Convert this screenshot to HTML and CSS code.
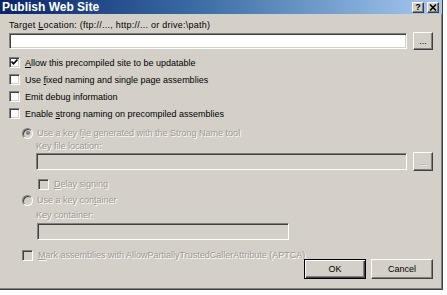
FILE: index.html
```html
<!DOCTYPE html>
<html lang="en">
<head>
    <meta charset="UTF-8">
    <title>Publish Web Site</title>
    <link rel="stylesheet" href="styles.css">
</head>
<body>
    <div class="dialog">
        <div class="titlebar">
            <span class="title">Publish Web Site</span>
            <div class="caption-btns">
                <span class="cap-btn">?</span>
                <span class="cap-btn close">
                    <svg width="8" height="7" viewBox="0 0 8 7"><path d="M1 0.5 L7 6.5 M7 0.5 L1 6.5" stroke="#000" stroke-width="1.6"/></svg>
                </span>
            </div>
        </div>

        <div class="content">
            <div class="label-row">Target <u>L</u>ocation: (ftp://..., http://... or drive:\path)</div>
            <div class="field-row">
                <div class="textbox"></div>
                <button class="btn browse">...</button>
            </div>

            <div class="check-row first">
                <span class="check checked">
                    <svg width="9" height="9" viewBox="0 0 9 9"><path d="M1.5 3.5 L3.5 5.8 L7.5 1.5" fill="none" stroke="#000" stroke-width="1.7"/></svg>
                </span>
                <span><u>A</u>llow this precompiled site to be updatable</span>
            </div>
            <div class="check-row">
                <span class="check"></span>
                <span>Use <u>f</u>ixed naming and single page assemblies</span>
            </div>
            <div class="check-row">
                <span class="check"></span>
                <span>Emit debu<u>g</u> information</span>
            </div>
            <div class="check-row">
                <span class="check"></span>
                <span>Enable <u>s</u>trong naming on precompiled assemblies</span>
            </div>

            <div class="strong-group disabled">
                <div class="radio-row first">
                    <span class="radio selected"></span>
                    <span>Use a key f<u>i</u>le generated with the Strong Name tool</span>
                </div>
                <div class="sub">
                    <div class="sub-label">Key file location:</div>
                    <div class="field-row tall">
                        <div class="textbox off"></div>
                        <button class="btn browse off">...</button>
                    </div>
                    <div class="check-row delay">
                        <span class="check off"></span>
                        <span><u>D</u>elay signing</span>
                    </div>
                </div>
                <div class="radio-row">
                    <span class="radio"></span>
                    <span>Use a key con<u>t</u>ainer</span>
                </div>
                <div class="sub">
                    <div class="sub-label container">Key container:</div>
                    <div class="textbox off short"></div>
                </div>
                <div class="check-row mark">
                    <span class="check off"></span>
                    <span><u>M</u>ark assemblies with AllowPartiallyTrustedCallerAttribute (APTCA)</span>
                </div>
            </div>

            <div class="actions">
                <button class="btn default">OK</button>
                <button class="btn">Cancel</button>
            </div>
        </div>
    </div>
</body>
</html>
```

FILE: styles.css
```css
body {
    margin: 0;
    background: #fdfdfd;
    font-family: 'Liberation Sans', Arial, sans-serif;
    font-size: 9px;
    color: #000;
}

.dialog {
    width: 443px;
    height: 290px;
    box-sizing: border-box;
    background: #d4d0c8;
    border-right: 1px solid #404040;
    border-bottom: 1px solid #404040;
    box-shadow: inset -1px -1px 0 #808080;
    display: flex;
    flex-direction: column;
}

.titlebar {
    height: 14px;
    background: linear-gradient(to right, #0a246a 0%, #3a6ea5 45%, #a6caf0 100%);
    display: flex;
    align-items: center;
    justify-content: space-between;
    padding: 0 3px 0 2px;
}

.title {
    color: #fff;
    font-weight: bold;
    font-size: 12px;
}

.caption-btns {
    display: flex;
    gap: 3px;
}

.cap-btn {
    width: 12px;
    height: 11px;
    box-sizing: border-box;
    background: #d4d0c8;
    border: 1px solid;
    border-color: #fff #404040 #404040 #fff;
    box-shadow: inset -1px -1px 0 #808080;
    font-size: 9px;
    font-weight: bold;
    line-height: 9px;
    text-align: center;
    display: flex;
    align-items: center;
    justify-content: center;
}

.content {
    padding: 5px 9px 0 9px;
    flex: 1;
    display: flex;
    flex-direction: column;
}

.label-row {
    height: 12px;
    line-height: 12px;
    letter-spacing: 0.25px;
}

.field-row {
    display: flex;
    align-items: flex-start;
    gap: 6px;
    margin-top: 1px;
    height: 18px;
}

.field-row.tall {
    height: 19px;
}

.textbox {
    flex: 1;
    height: 16px;
    margin-top: 1px;
    box-sizing: border-box;
    background: #fff;
    border: 1px solid;
    border-color: #808080 #fff #fff #808080;
    box-shadow: inset 1px 1px 0 #404040, inset -1px -1px 0 #d4d0c8;
}

.textbox.off {
    background: #d4d0c8;
    height: 17px;
}

.textbox.short {
    flex: none;
    width: 252px;
    margin-left: 1px;
}

.btn {
    font-family: inherit;
    font-size: 9px;
    background: #d4d0c8;
    border: 1px solid;
    border-color: #fff #404040 #404040 #fff;
    box-shadow: inset -1px -1px 0 #808080;
    padding: 0;
    color: #000;
}

.browse {
    width: 20px;
    height: 18px;
    line-height: 14px;
}

.browse.off {
    height: 19px;
    color: #9c9890;
    text-shadow: 1px 1px 0 #fff;
}

.check-row,
.radio-row {
    display: flex;
    align-items: center;
    gap: 5px;
    height: 17px;
}

.check-row.first {
    margin-top: 4px;
}

.check {
    width: 11px;
    height: 11px;
    box-sizing: border-box;
    background: #fff;
    border: 1px solid;
    border-color: #808080 #fff #fff #808080;
    box-shadow: inset 1px 1px 0 #404040, inset -1px -1px 0 #d4d0c8;
    display: flex;
    align-items: center;
    justify-content: center;
}

.check.off {
    background: #d4d0c8;
}

.strong-group {
    padding-left: 13px;
    margin-top: 3px;
    color: #9c9890;
    text-shadow: 1px 1px 0 #fff;
}

.radio-row {
    height: 16px;
    gap: 4px;
}

.radio {
    width: 11px;
    height: 11px;
    box-sizing: border-box;
    border-radius: 50%;
    background: #d4d0c8;
    border: 1px solid;
    border-color: #808080 #fff #fff #808080;
    box-shadow: inset 1px 1px 0 #404040;
    display: flex;
    align-items: center;
    justify-content: center;
}

.radio.selected::after {
    content: "";
    width: 4px;
    height: 4px;
    border-radius: 50%;
    background: #808080;
}

.sub {
    padding-left: 14px;
}

.sub-label {
    height: 12px;
    line-height: 12px;
    margin-top: -1px;
}

.sub-label.container {
    margin-top: 1px;
}

.sub .field-row {
    margin-top: 0;
}

.sub .textbox.short {
    margin-top: 2px;
    margin-left: 1px;
}

.check-row.delay {
    padding-left: 2px;
    height: 16px;
    margin-top: 5px;
}

.check-row.mark {
    margin-top: 7px;
    height: 16px;
}

.actions {
    display: flex;
    justify-content: flex-end;
    gap: 5px;
    height: 20px;
    margin-top: -4px;
}

.actions .btn {
    width: 62px;
    height: 20px;
}

.btn.default {
    border: 1px solid #000;
    box-shadow: inset 1px 1px 0 #fff, inset -1px -1px 0 #404040, inset -2px -2px 0 #808080;
}
```
